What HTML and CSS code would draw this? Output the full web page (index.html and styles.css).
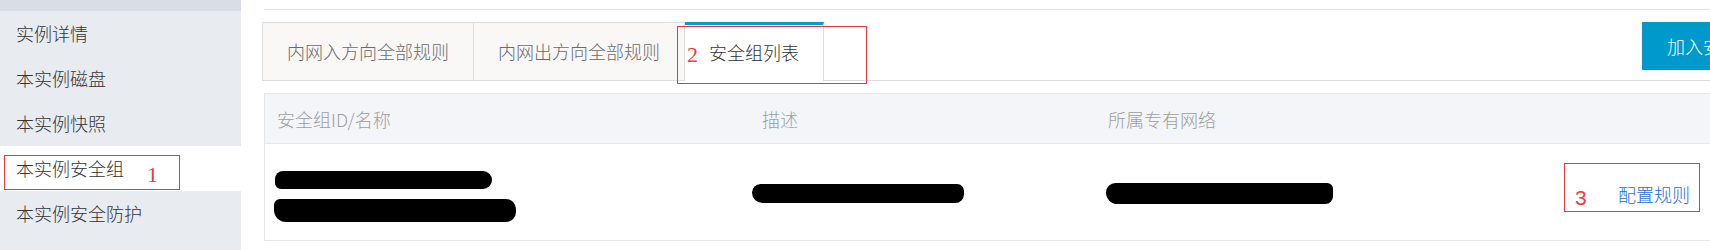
FILE: index.html
```html
<!DOCTYPE html>
<html lang="zh-CN">
<head>
<meta charset="utf-8">
<title>本实例安全组</title>
<link rel="stylesheet" href="styles.css">
</head>
<body>
<div class="page">
  <aside class="sidebar">
    <div class="sidebar-top"></div>
    <div class="nav-item">实例详情</div>
    <div class="nav-item">本实例磁盘</div>
    <div class="nav-item">本实例快照</div>
    <div class="nav-item active">本实例安全组</div>
    <div class="nav-item">本实例安全防护</div>
  </aside>
  <main class="main">
    <div class="topline"></div>
    <div class="toolbar">
      <div class="tabs">
        <div class="tab">内网入方向全部规则</div>
        <div class="tab">内网出方向全部规则</div>
        <div class="tab active">安全组列表</div>
      </div>
      <button class="btn">加入安全组</button>
    </div>
    <div class="table">
      <div class="thead">
        <div class="cell">安全组ID/名称</div>
        <div class="cell">描述</div>
        <div class="cell">所属专有网络</div>
        <div class="cell"></div>
      </div>
      <div class="trow">
        <div class="cell cell-id">
          <div class="scribble s1"></div>
          <div class="scribble s2"></div>
        </div>
        <div class="cell cell-mid">
          <div class="scribble s3"></div>
        </div>
        <div class="cell cell-mid">
          <div class="scribble s4"></div>
        </div>
        <div class="cell cell-mid">
          <a class="link" href="#">配置规则</a>
        </div>
      </div>
    </div>
  </main>

  <div class="mark mark1"><span class="num serif">1</span></div>
  <div class="mark mark2"><span class="num serif">2</span></div>
  <div class="mark mark3"><span class="num sans">3</span></div>
</div>
</body>
</html>
```
FILE: styles.css
```css
html, body {
  margin: 0;
  padding: 0;
  background: #fff;
  overflow: hidden;
}

body {
  width: 1710px;
  height: 250px;
  font-family: "Noto Sans CJK SC", "Liberation Sans", sans-serif;
  font-weight: 300;
}

.page {
  position: relative;
  display: flex;
  width: 1710px;
  height: 250px;
  overflow: hidden;
}

/* Sidebar */
.sidebar {
  flex: none;
  width: 241px;
  height: 250px;
  background: #e8ebf0;
}

.sidebar-top {
  height: 11px;
  background: #d9dde6;
}

.nav-item {
  height: 45px;
  line-height: 45px;
  padding-left: 16px;
  font-size: 18px;
  color: #333;
}

.nav-item.active {
  background: #fff;
}

/* Main */
.main {
  flex: none;
  width: 1541px;
  padding-left: 21px;
  box-sizing: border-box;
}

.topline {
  margin: 9px 0 0 2px;
  height: 1px;
  background: #e1e1e1;
}

.toolbar {
  margin-top: 12px;
  height: 59px;
  box-sizing: border-box;
  display: flex;
  align-items: flex-start;
  justify-content: space-between;
  border-bottom: 1px solid #dddddd;
}

.tabs {
  display: flex;
}

.tab {
  height: 58px;
  box-sizing: border-box;
  padding: 0 24px;
  border-top: 1px solid #dddddd;
  border-right: 1px solid #dddddd;
  background: #f9f8f7;
  font-size: 18px;
  line-height: 57px;
  color: #6b6b6b;
  white-space: nowrap;
}

.tab:first-child {
  border-left: 1px solid #dddddd;
}

.tab.active {
  height: 59px;
  border-top: 3px solid #00a0d2;
  background: #fff;
  color: #333;
  line-height: 55px;
}

.btn {
  height: 48px;
  padding: 0 25px;
  border: none;
  background: #0099cc;
  color: #fff;
  font-family: inherit;
  font-weight: 300;
  font-size: 18px;
  line-height: 48px;
  white-space: nowrap;
}

/* Table */
.table {
  margin: 12px 0 0 2px;
  border: 1px solid #e3e6eb;
}

.thead,
.trow {
  display: grid;
  grid-template-columns: 485px 346px 510px 1fr;
}

.thead {
  height: 50px;
  box-sizing: border-box;
  background: #f3f5f8;
  border-bottom: 1px solid #e3e6eb;
  font-size: 18px;
  line-height: 51px;
  color: #9e9e9e;
}

.trow {
  height: 96px;
}

.cell {
  padding-left: 12px;
  white-space: nowrap;
}

.cell-id {
  padding-top: 27px;
}

.cell-mid {
  display: flex;
  align-items: center;
}

.scribble {
  position: relative;
  background: #000;
  border-radius: 9px;
}

.s1 {
  width: 217px;
  height: 18px;
  margin-left: -2px;
  border-radius: 8px 9px 9px 6px;
}

.s2 {
  width: 242px;
  height: 23px;
  margin: 10px 0 0 -3px;
  border-radius: 6px 10px 10px 12px;
}

.s3 {
  width: 212px;
  height: 19px;
  margin: 3px 0 0 -10px;
  border-radius: 10px 8px 10px 12px;
}

.s4 {
  width: 227px;
  height: 21px;
  margin: 2px 0 0 -2px;
  border-radius: 10px 6px 8px 12px;
}

.link {
  margin-top: 3px;
  font-size: 18px;
  color: #1a6fd8;
  text-decoration: none;
}

/* Annotation overlays */
.mark {
  position: absolute;
  box-sizing: border-box;
  border: 1px solid #e8383d;
}

.mark1 {
  left: 4px;
  top: 155px;
  width: 176px;
  height: 35px;
}

.mark2 {
  left: 677px;
  top: 26px;
  width: 190px;
  height: 58px;
}

.mark3 {
  left: 1564px;
  top: 163px;
  width: 136px;
  height: 49px;
}

.num {
  position: absolute;
  color: #ee3a3f;
  line-height: 1;
  font-weight: 400;
}

.serif {
  font-family: "Liberation Serif", serif;
  font-size: 22px;
}

.sans {
  font-family: "Liberation Sans", sans-serif;
  font-size: 21px;
}

.mark1 .num {
  left: 142px;
  top: 8px;
}

.mark2 .num {
  left: 9px;
  top: 17px;
}

.mark3 .num {
  left: 10px;
  top: 23px;
}
```
